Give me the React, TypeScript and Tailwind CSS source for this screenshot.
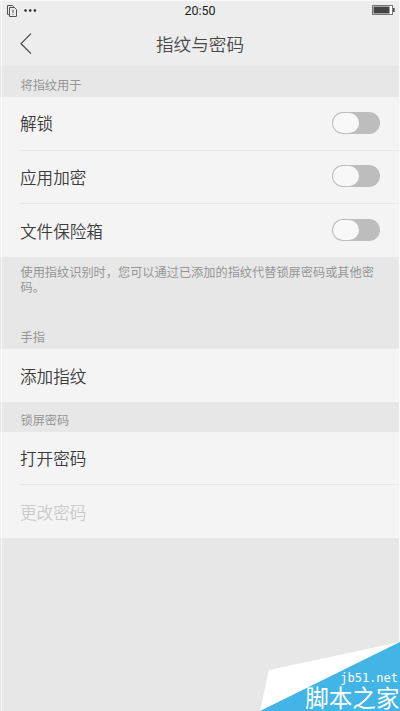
import clsx from "clsx";

interface RowProps {
    label: string;
    toggle?: boolean;
    disabled?: boolean;
    last?: boolean;
}

export default function App() {
    return (
        <div className="relative flex flex-col w-[400px] h-[711px] overflow-hidden bg-[#e7e7e7] font-['Noto_Sans_CJK_SC','Noto_Sans',sans-serif]">
            <header className="h-[66px] shrink-0 bg-[#ededed]">
                <StatusBar />
                <div className="grid grid-cols-[60px_1fr_60px] items-center h-11">
                    <svg className="ml-5 w-3 h-[22px]" viewBox="0 0 12 22" fill="none" stroke="#444" strokeWidth="1.2">
                        <path d="M11 .7 1 10.7 11 20.7" />
                    </svg>
                    <h1 className="text-[17.6px] leading-[44px] text-center text-[#484848] font-[350]">指纹与密码</h1>
                </div>
            </header>

            <SectionLabel className="h-[31px]">将指纹用于</SectionLabel>
            <section className="bg-[#f4f4f4]">
                <Row label="解锁" toggle />
                <Row label="应用加密" toggle />
                <Row label="文件保险箱" toggle last />
            </section>

            <p className="h-[61px] shrink-0 pt-[8px] pl-[20.5px] pr-5 text-[12.2px] leading-[15px] text-[#959595]">
                使用指纹识别时，您可以通过已添加的指纹代替锁屏密码或其他密码。
            </p>

            <SectionLabel className="h-[31px]">手指</SectionLabel>
            <section className="bg-[#f4f4f4]">
                <Row label="添加指纹" last />
            </section>

            <SectionLabel className="h-[29.5px]">锁屏密码</SectionLabel>
            <section className="bg-[#f4f4f4]">
                <Row label="打开密码" />
                <Row label="更改密码" disabled last />
            </section>

            {/* Lignes claires sur les bords de l'écran */}
            <div className="absolute inset-0 border-t border-r border-[#fafafa] pointer-events-none" />
            <div className="absolute left-px inset-y-0 w-px bg-white/70" />

            <Watermark />
        </div>
    );
}

function StatusBar() {
    return (
        <div className="grid grid-cols-3 items-center h-[22px] px-[7px]">
            <div className="flex items-center gap-[7px] mt-[-1px]">
                <svg width="10" height="12" viewBox="0 0 10 12" fill="none" stroke="#555" strokeWidth="1">
                    <path d="M2.5 9.5H.5v-9h5l1.5 2" />
                    <path d="M2.5 2.5h5l2 2v7h-7z" />
                    <path d="M6 4.5v3.5M6 9v1" />
                </svg>
                <svg width="13" height="3" viewBox="0 0 13 3" fill="#222">
                    <circle cx="1.5" cy="1.5" r="1.25" />
                    <circle cx="6.2" cy="1.5" r="1.25" />
                    <circle cx="10.9" cy="1.5" r="1.25" />
                </svg>
            </div>
            <span className="font-['Roboto',sans-serif] text-[12.5px] leading-[22px] text-center text-[#222]">20:50</span>
            <svg className="justify-self-end mr-[-2px] mt-[-2px]" width="23" height="10" viewBox="0 0 23 10">
                <rect x=".5" y=".5" width="20" height="9" fill="#fff" stroke="#777" />
                <rect x="1.5" y="1.5" width="16" height="7" fill="#444" />
                <rect x="21" y="3" width="1.7" height="4" fill="#555" />
            </svg>
        </div>
    );
}

function SectionLabel(props: { className: string; children: string }) {
    return (
        <h2 className={clsx("flex items-end shrink-0 pl-[20.5px] pb-[3px] text-[12.2px] leading-[18px] text-[#959595]", props.className)}>
            {props.children}
        </h2>
    );
}

function Row({ label, toggle, disabled, last }: RowProps) {
    return (
        <div className="pl-5">
            <div
                className={clsx(
                    "flex items-center justify-between pr-5",
                    last ? "h-[53px]" : "h-[53.5px] border-b border-[#e9e9e9]"
                )}
            >
                <span className={clsx("text-[16.6px] leading-6 font-[350]", disabled ? "text-[#cacaca]" : "text-[#3c3c3c]")}>
                    {label}
                </span>
                {toggle && <Toggle />}
            </div>
        </div>
    );
}

function Toggle() {
    return (
        <button role="switch" aria-checked="false" className="w-12 h-[22px] mb-px p-px rounded-full bg-[#bdbdbd]">
            <span className="block w-[26px] h-5 rounded-full bg-[#f8f8f8]" />
        </button>
    );
}

function Watermark() {
    return (
        <div className="absolute right-0 bottom-0 w-[140px] h-[69px]">
            <svg className="absolute inset-0" width="140" height="69" viewBox="0 0 140 69">
                <path d="M0 69 9 28 140 0z" fill="#fff" />
                <path d="M0 69 140 0v69z" fill="#42b4e6" />
            </svg>
            <div className="relative flex flex-col items-end text-white">
                <span className="mt-[30px] mr-[2px] font-['DejaVu_Sans_Mono',monospace] text-[12px] leading-[13px]">jb51.net</span>
                <span className="mr-[0.5px] text-[23.6px] leading-[24px]">脚本之家</span>
            </div>
        </div>
    );
}
